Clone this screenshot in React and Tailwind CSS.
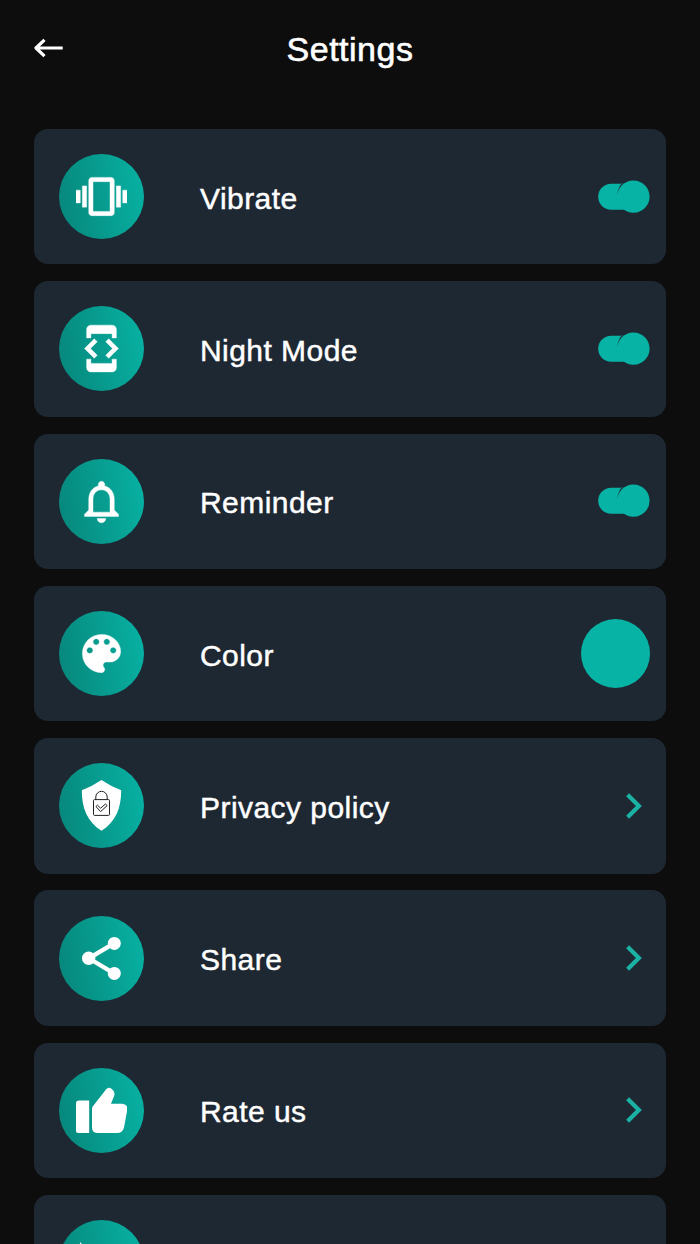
import { useState } from 'react'

function MaterialIcon({ d }) {
  return (
    <svg viewBox="0 0 24 24" className="w-[51px] h-[51px] fill-white stroke-white" strokeWidth="0.2" strokeLinejoin="round">
      <path d={d} />
    </svg>
  )
}

function ShareIcon() {
  return (
    <svg viewBox="0 0 51 51" className="w-[51px] h-[51px] fill-white stroke-white">
      <path d="M38 10.4L12.8 25.3L38 40.4" fill="none" strokeWidth="4.3" />
      <circle cx="38.3" cy="10.4" r="6.5" stroke="none" />
      <circle cx="12.7" cy="25.3" r="6.7" stroke="none" />
      <circle cx="38.3" cy="40.4" r="6.5" stroke="none" />
    </svg>
  )
}

function ShieldIcon() {
  return (
    <svg viewBox="0 0 51 51" className="w-[51px] h-[51px]">
      <path fill="#fff" d="M25.5 0Q35 6.5 45.2 10.2C45.2 28 40 41.5 25.5 50.8C11 41.5 5.8 28 5.8 10.2Q16 6.5 25.5 0Z" />
      <g fill="none" stroke="#222" strokeWidth="1" strokeLinejoin="round">
        <rect x="17.5" y="19.6" width="16" height="15.8" rx="1" />
        <path d="M19.8 19.6V17a5.7 5.7 0 0 1 11.4 0V19.6" />
        <path d="M20 26.6L21.5 25.2L24.6 28.2L29.5 24L31.2 25.6L24.6 31.6Z" />
      </g>
    </svg>
  )
}

function ThumbIcon() {
  return (
    <svg viewBox="0 0 51 51" className="w-[51px] h-[51px] fill-white">
      <path d="M3 15.5H13.2V48H2Q0 48 0 46V18.5Q0 15.5 3 15.5Z" />
      <path d="M16.7 21.5L30 4.5Q32.5 1.4 36 4.2Q39.3 6.5 38.3 10.5L35 18.7H46.5Q51.8 19.3 51.3 24.5L48 42.5Q46.5 48 41 48H22Q16 48 16 42.5V24Q16 22.5 16.7 21.5Z" />
    </svg>
  )
}

function SparkleIcon() {
  return (
    <svg viewBox="0 0 51 51" className="w-[51px] h-[51px] fill-white">
      <path d="M4.7 5L6.2 8.5L9.7 10L6.2 11.5L4.7 15L3.2 11.5L0 10L3.2 8.5Z" />
      <path d="M26 10L30 21L41 25L30 29L26 40L22 29L11 25L22 21Z" />
    </svg>
  )
}

const vibration = "M0 15h2V9H0v6zm3 2h2V7H3v10zm19-8v6h2V9h-2zm-3 8h2V7h-2v10zM16.5 3h-9C6.67 3 6 3.67 6 4.5v15c0 .83.67 1.5 1.5 1.5h9c.83 0 1.5-.67 1.5-1.5v-15c0-.83-.67-1.5-1.5-1.5zM16 19H8V5h8v14z"
const devMode = "M7 5h10v2h2V3c0-1.1-.9-2-2-2H7c-1.1 0-2 .9-2 2v4h2V5zm8.41 11.59L20 12l-4.59-4.59L14 8.83 17.17 12 14 15.17l1.41 1.42zM10 15.17L6.83 12 10 8.83 8.59 7.41 4 12l4.59 4.59L10 15.17zM17 19H7v-2H5v4c0 1.1.9 2 2 2h10c1.1 0 2-.9 2-2v-4h-2v2z"
const bell = "M12 22c1.1 0 2-.9 2-2h-4c0 1.1.9 2 2 2zm6-6v-5c0-3.07-1.64-5.64-4.5-6.32V4c0-.83-.67-1.5-1.5-1.5s-1.5.67-1.5 1.5v.68C7.63 5.36 6 7.92 6 11v5l-2 2v1h16v-1l-2-2zm-2 1H8v-6c0-2.48 1.51-4.5 4-4.5s4 2.02 4 4.5v6z"
const palette = "M12 3c-4.97 0-9 4.03-9 9s4.03 9 9 9c.83 0 1.5-.67 1.5-1.5 0-.39-.15-.74-.39-1.01-.23-.26-.38-.61-.38-.99 0-.83.67-1.5 1.5-1.5H16c2.76 0 5-2.24 5-5 0-4.42-4.03-8-9-8zm-5.5 9c-.83 0-1.5-.67-1.5-1.5S5.67 9 6.5 9 8 9.67 8 10.5 7.33 12 6.5 12zm3-4C8.67 8 8 7.33 8 6.5S8.67 5 9.5 5s1.5.67 1.5 1.5S10.33 8 9.5 8zm5 0c-.83 0-1.5-.67-1.5-1.5S13.67 5 14.5 5s1.5.67 1.5 1.5S15.33 8 14.5 8zm3 4c-.83 0-1.5-.67-1.5-1.5S16.67 9 17.5 9s1.5.67 1.5 1.5-.67 1.5-1.5 1.5z"

const rows = [
  { id: "vibrate", label: "Vibrate", type: "toggle", icon: <MaterialIcon d={vibration} /> },
  { id: "night", label: "Night Mode", type: "toggle", icon: <MaterialIcon d={devMode} /> },
  { id: "reminder", label: "Reminder", type: "toggle", icon: <MaterialIcon d={bell} /> },
  { id: "color", label: "Color", type: "color", icon: <MaterialIcon d={palette} /> },
  { id: "privacy", label: "Privacy policy", type: "link", icon: <ShieldIcon /> },
  { id: "share", label: "Share", type: "link", icon: <ShareIcon /> },
  { id: "rate", label: "Rate us", type: "link", icon: <ThumbIcon /> },
  { id: "more", type: "none", icon: <SparkleIcon /> },
]

function Toggle({ label }) {
  const [on, setOn] = useState(true)

  return (
    <button
      role="switch"
      aria-checked={on}
      aria-label={label}
      onClick={() => setOn(!on)}
      className="cursor-pointer"
    >
      <svg viewBox="0 0 52 34" className={on ? "w-[52px] h-[34px]" : "w-[52px] h-[34px] -scale-x-100 opacity-50"}>
        <rect x="0.2" y="3.8" width="46" height="26" rx="13" fill="#07b3a4" />
        <path d="M24 3.2Q19.6 8 19.5 14.5L26 6Z" fill="#1e2833" />
        <circle cx="35.4" cy="16.6" r="16.2" fill="#07b3a4" />
      </svg>
    </button>
  )
}

function RowControl({ row }) {
  if (row.type === "toggle") return <Toggle label={row.label} />
  if (row.type === "color") return <span className="w-[68.5px] h-[68.5px] rounded-full bg-[#07b3a4]" />
  if (row.type === "link") {
    return (
      <svg viewBox="0 0 18 28" className="w-[18px] h-7 mr-[7px]" fill="none" stroke="#1bb1a4" strokeWidth="4.2">
        <path d="M2.6 2.8L13.9 14L2.6 25.2" />
      </svg>
    )
  }
  return null
}

export default function App() {
  return (
    <div className="h-[1244px] overflow-hidden bg-[#0d0d0d] text-white font-['Liberation_Sans',Arial,sans-serif]">
      <header className="h-[129px] pt-[27px] px-[34px] grid grid-cols-[60px_1fr_60px] items-start">
        <button aria-label="Back" className="pt-[11px] cursor-pointer">
          <svg viewBox="0 0 30 20" className="w-[30px] h-5" fill="none" stroke="#fff" strokeWidth="3.2" strokeLinejoin="round">
            <path d="M28.7 10H2.5M10.5 1.8L2 10L10.5 18.2" />
          </svg>
        </button>
        <h1 className="text-center text-[34px] leading-[44px] tracking-[0.5px] [-webkit-text-stroke:0.6px_white]">
          Settings
        </h1>
      </header>
      <main className="px-[33.8px] flex flex-col gap-[16.9px]">
        {rows.map(row => (
          <div
            key={row.id}
            className="h-[135.4px] shrink-0 rounded-[14px] bg-[#1e2833] pl-[25.2px] pr-[16.4px] flex items-center"
          >
            <div className="w-[85px] h-[85px] shrink-0 rounded-full bg-linear-[80deg] from-[#07857a] to-[#07b3a4] flex items-center justify-center">
              {row.icon}
            </div>
            <div className="flex-1 pl-14 pt-1">
              <span className="text-[30px] leading-9 tracking-[0.45px] whitespace-nowrap [-webkit-text-stroke:0.45px_white]">
                {row.label}
              </span>
            </div>
            <RowControl row={row} />
          </div>
        ))}
      </main>
    </div>
  )
}
